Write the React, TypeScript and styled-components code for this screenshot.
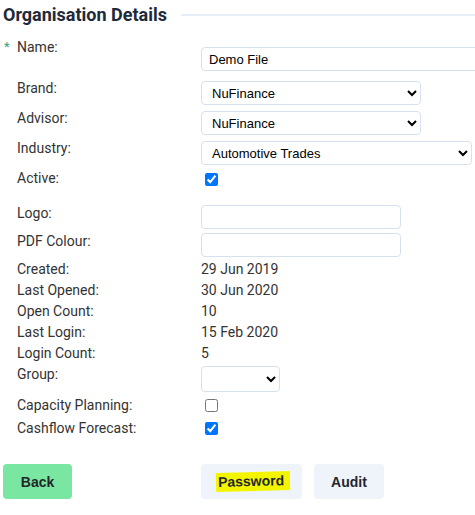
import React, { FC, ReactNode } from 'react'
import styled, { createGlobalStyle } from 'styled-components'

const GlobalStyle = createGlobalStyle`
  body {
    margin: 0;
    background: #ffffff;
    font-family: Roboto, "Liberation Sans", Arial, sans-serif;
  }
`

const Page = styled.div`
  width: 475px;
  height: 515px;
  overflow: hidden;
  padding-left: 3px;
  box-sizing: border-box;
`

const Header = styled.div`
  display: flex;
  align-items: center;
  height: 28px;
  white-space: nowrap;
`

const Title = styled.h2`
  margin: 0;
  font-size: 18px;
  font-weight: 700;
  color: #1d2a39;
`

const TitleLine = styled.div`
  flex: 1;
  height: 2px;
  margin-left: 14px;
  margin-top: 2px;
  background-color: #e6eef8;
`

const Form = styled.div`
  display: flex;
  flex-direction: column;
  padding-top: 9px;
`

const Row = styled.div<{ $h: number }>`
  display: flex;
  align-items: flex-start;
  height: ${({ $h }) => $h}px;
`

const Required = styled.div`
  flex-shrink: 0;
  width: 14px;
  padding-left: 1px;
  box-sizing: border-box;
  font-size: 13px;
  line-height: 20px;
  color: #36a47a;
`

const Label = styled.div`
  flex-shrink: 0;
  width: 184px;
  font-size: 14px;
  line-height: 20px;
  color: #333333;
`

const Value = styled.div`
  font-size: 14px;
  line-height: 20px;
  color: #333333;
`

const Field = styled.div<{ $top: number }>`
  display: flex;
  flex-shrink: 0;
  padding-top: ${({ $top }) => $top}px;
`

const TextInput = styled.input<{ $w: number }>`
  width: ${({ $w }) => $w}px;
  height: 24px;
  box-sizing: border-box;
  border: 1px solid #d6e1ee;
  border-radius: 4px;
  padding: 0 7px;
  font-family: "Liberation Sans", Arial, sans-serif;
  font-size: 13px;
  color: #000000;
  background: #ffffff;
  outline: none;
`

const Select = styled.select<{ $w: number; $h?: number }>`
  width: ${({ $w }) => $w}px;
  height: ${({ $h }) => $h ?? 24}px;
  box-sizing: border-box;
  border: 1px solid #d6e1ee;
  border-radius: 4px;
  padding: 0 6px;
  font-family: "Liberation Sans", Arial, sans-serif;
  font-size: 13px;
  color: #000000;
  background: #ffffff;
  outline: none;
`

const Check = styled.input`
  width: 13px;
  height: 13px;
  margin: 0 0 0 4px;
`

const Buttons = styled.div`
  display: flex;
  gap: 12px;
  margin-top: 23px;
`

const Button = styled.button<{ $w: number; $green?: boolean }>`
  flex-shrink: 0;
  width: ${({ $w }) => $w}px;
  height: 35px;
  border: none;
  border-radius: 4px;
  background-color: ${({ $green }) => ($green ? '#79e6a1' : '#eff4fb')};
  font-family: "Liberation Sans", Arial, sans-serif;
  font-size: 14px;
  font-weight: 700;
  color: #23262b;
  cursor: pointer;
  padding: 0;
`

const BackSlot = styled.div`
  flex-shrink: 0;
  width: 186px;
`

const Highlight = styled.span`
  display: inline-block;
  margin-left: 4px;
  padding: 1px 6px 2px 2px;
  background-color: #f3f500;
  transform: rotate(-1.5deg);
`

type FormRowProps = {
  label: string
  h: number
  top?: number
  required?: boolean
  children?: ReactNode
}

const FormRow: FC<FormRowProps> = ({ label, h, top = 0, required, children }) => (
  <Row $h={h}>
    <Required>{required ? '*' : ''}</Required>
    <Label>{label}</Label>
    <Field $top={top}>{children}</Field>
  </Row>
)

const App: FC = () => {
  return (
    <>
      <GlobalStyle />
      <Page>
        <Header>
          <Title>Organisation Details</Title>
          <TitleLine />
        </Header>
        <Form>
          <FormRow label="Name:" h={41} top={10} required>
            <TextInput $w={280} defaultValue="Demo File" />
          </FormRow>
          <FormRow label="Brand:" h={30} top={3}>
            <Select $w={220} defaultValue="NuFinance">
              <option>NuFinance</option>
            </Select>
          </FormRow>
          <FormRow label="Advisor:" h={30} top={3}>
            <Select $w={220} defaultValue="NuFinance">
              <option>NuFinance</option>
            </Select>
          </FormRow>
          <FormRow label="Industry:" h={30} top={3}>
            <Select $w={271} defaultValue="Automotive Trades">
              <option>Automotive Trades</option>
            </Select>
          </FormRow>
          <FormRow label="Active:" h={35} top={5}>
            <Check type="checkbox" defaultChecked />
          </FormRow>
          <FormRow label="Logo:" h={28} top={2}>
            <TextInput $w={200} />
          </FormRow>
          <FormRow label="PDF Colour:" h={28} top={2}>
            <TextInput $w={200} />
          </FormRow>
          <FormRow label="Created:" h={21}>
            <Value>29 Jun 2019</Value>
          </FormRow>
          <FormRow label="Last Opened:" h={21}>
            <Value>30 Jun 2020</Value>
          </FormRow>
          <FormRow label="Open Count:" h={21}>
            <Value>10</Value>
          </FormRow>
          <FormRow label="Last Login:" h={21}>
            <Value>15 Feb 2020</Value>
          </FormRow>
          <FormRow label="Login Count:" h={21}>
            <Value>5</Value>
          </FormRow>
          <FormRow label="Group:" h={31} top={2}>
            <Select $w={79} $h={26} defaultValue="">
              <option value=""></option>
            </Select>
          </FormRow>
          <FormRow label="Capacity Planning:" h={23} top={4}>
            <Check type="checkbox" />
          </FormRow>
          <FormRow label="Cashflow Forecast:" h={23} top={4}>
            <Check type="checkbox" defaultChecked />
          </FormRow>
        </Form>
        <Buttons>
          <BackSlot>
            <Button $w={69} $green>Back</Button>
          </BackSlot>
          <Button $w={101}>
            <Highlight>Password</Highlight>
          </Button>
          <Button $w={70}>Audit</Button>
        </Buttons>
      </Page>
    </>
  )
}

export default App
